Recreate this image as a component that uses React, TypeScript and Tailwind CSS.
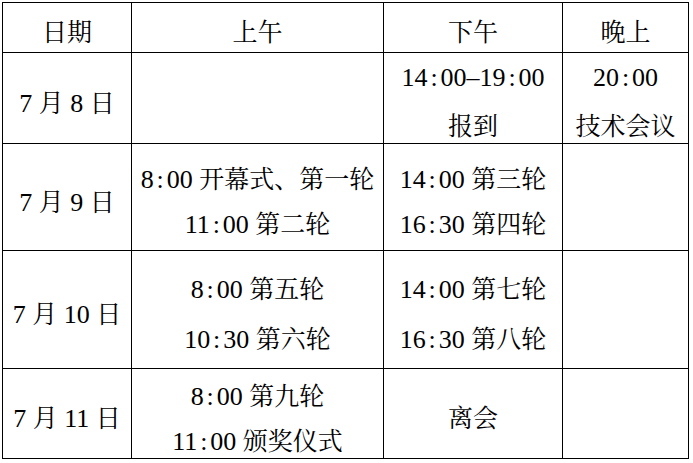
import React from "react";

const LATIN = "font-['Liberation_Serif',serif] text-[26px]";
const CJK = "font-['Noto_Serif_CJK_SC',serif] text-[25px]";

function T({ s }: { s: string }) {
  const parts: React.ReactNode[] = [];
  let buf = "";
  let latin: boolean | null = null;
  const flush = (k: string) => {
    if (buf) {
      parts.push(
        <span key={k} className={latin ? LATIN : CJK}>
          {buf}
        </span>
      );
    }
    buf = "";
  };
  s.split("").forEach((ch, i) => {
    if (ch === ":" || ch === "-") {
      flush("b" + i);
      latin = null;
      parts.push(
        <span key={i} className={`inline-block w-[0.5em] text-center ${LATIN}`}>
          {ch === "-" ? "–" : ":"}
        </span>
      );
      return;
    }
    const l = /[0-9 ]/.test(ch);
    if (latin !== null && l !== latin) flush("b" + i);
    latin = l;
    buf += ch;
  });
  flush("end");
  return <>{parts}</>;
}

function Cell({
  lines,
  lh = "leading-[42px]",
}: {
  lines: string[];
  lh?: string;
}) {
  return (
    <div
      className={`flex flex-col items-center justify-center border-r border-b border-black pt-[10px] ${lh}`}
    >
      {lines.map((l, i) => (
        <div key={i} className="whitespace-pre">
          <T s={l} />
        </div>
      ))}
    </div>
  );
}

export default function App() {
  return (
    <div className="w-[693px] h-[463px] bg-white overflow-hidden">
      <div className="ml-[2px] mt-[2px] grid w-max grid-cols-[129px_252px_179px_126px] grid-rows-[50px_91px_107px_118px_90px] border-l border-t border-black font-normal text-black">
        <Cell lines={["日期"]} />
        <Cell lines={["上午"]} />
        <Cell lines={["下午"]} />
        <Cell lines={["晚上"]} />

        <Cell lines={["7 月 8 日"]} />
        <Cell lines={[]} />
        <Cell lines={["14:00-19:00", "报到"]} lh="leading-[44px]" />
        <Cell lines={["20:00", "技术会议"]} lh="leading-[44px]" />

        <Cell lines={["7 月 9 日"]} />
        <Cell lines={["8:00 开幕式、第一轮", "11:00 第二轮"]} lh="leading-[40px]" />
        <Cell lines={["14:00 第三轮", "16:30 第四轮"]} lh="leading-[40px]" />
        <Cell lines={[]} />

        <Cell lines={["7 月 10 日"]} />
        <Cell lines={["8:00 第五轮", "10:30 第六轮"]} lh="leading-[45px]" />
        <Cell lines={["14:00 第七轮", "16:30 第八轮"]} lh="leading-[45px]" />
        <Cell lines={[]} />

        <Cell lines={["7 月 11 日"]} />
        <Cell lines={["8:00 第九轮", "11:00 颁奖仪式"]} lh="leading-[40px]" />
        <Cell lines={["离会"]} />
        <Cell lines={[]} />
      </div>
    </div>
  );
}
